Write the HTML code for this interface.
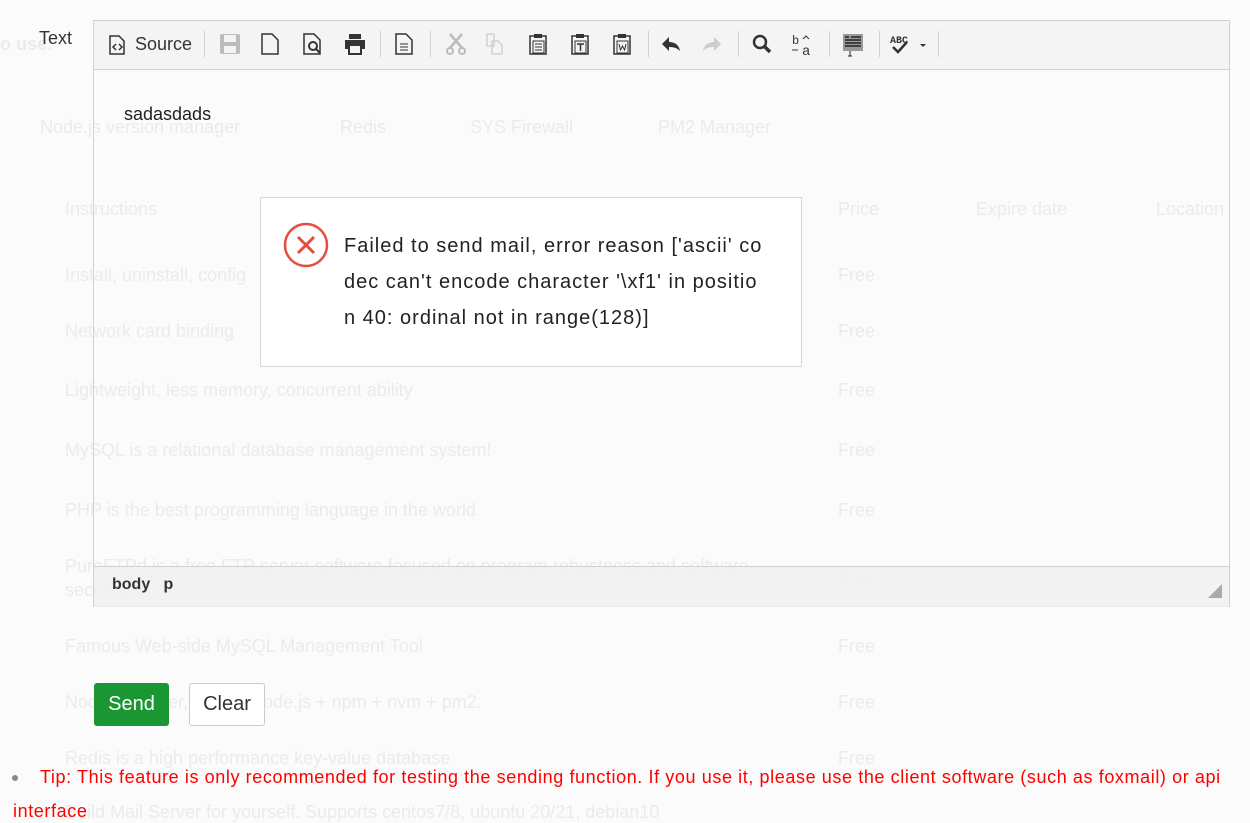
<!DOCTYPE html>
<html><head><meta charset="utf-8"><style>
body{margin:0;width:1250px;height:816px;background:#fbfbfb;font-family:"Liberation Sans",sans-serif;position:relative;overflow:hidden}
.a{position:absolute;white-space:nowrap}
.bg{color:#ebebeb;font-size:18px;position:absolute;white-space:nowrap}
.tb{position:absolute;left:93px;top:20px;width:1135px;height:48px;background:#f4f4f4;border:1px solid #d1d1d1}
.ed{position:absolute;left:93px;top:20px;width:1135px;height:585px;border:1px solid #d1d1d1;background:transparent}
.sb{position:absolute;left:94px;top:566px;width:1135px;height:40px;background:rgba(240,240,240,0.85);border-top:1px solid #d1d1d1}
.sep{position:absolute;top:31px;width:1px;height:26px;background:#d1d1d1}
svg.i{position:absolute;top:33px}
</style></head><body>
<div class="bg" style="left:0;top:34px;font-weight:bold">o use:</div>
<div class="bg" style="left:40px;top:117px">Node.js version manager</div>
<div class="bg" style="left:340px;top:117px">Redis</div>
<div class="bg" style="left:470px;top:117px">SYS Firewall</div>
<div class="bg" style="left:658px;top:117px">PM2 Manager</div>
<div class="bg" style="left:65px;top:199px">Instructions</div>
<div class="bg" style="left:838px;top:199px">Price</div>
<div class="bg" style="left:976px;top:199px">Expire date</div>
<div class="bg" style="left:1156px;top:199px">Location</div>
<div class="bg" style="left:65px;top:265px">Install, uninstall, config</div>
<div class="bg" style="left:65px;top:321px">Network card binding</div>
<div class="bg" style="left:65px;top:380px">Lightweight, less memory, concurrent ability</div>
<div class="bg" style="left:65px;top:440px">MySQL is a relational database management system!</div>
<div class="bg" style="left:65px;top:500px">PHP is the best programming language in the world</div>
<div class="bg" style="left:65px;top:556px">PureFTPd is a free FTP server software focused on program robustness and software</div>
<div class="bg" style="left:65px;top:580px">security.</div>
<div class="bg" style="left:65px;top:636px">Famous Web-side MySQL Management Tool</div>
<div class="bg" style="left:65px;top:692px">Node Manager, Built-in node.js + npm + nvm + pm2.</div>
<div class="bg" style="left:65px;top:748px">Redis is a high performance key-value database</div>
<div class="bg" style="left:65px;top:802px">Build Mail Server for yourself. Supports centos7/8, ubuntu 20/21, debian10</div>
<div class="bg" style="left:838px;top:265px">Free</div><div class="bg" style="left:838px;top:321px">Free</div><div class="bg" style="left:838px;top:380px">Free</div><div class="bg" style="left:838px;top:440px">Free</div><div class="bg" style="left:838px;top:500px">Free</div><div class="bg" style="left:838px;top:568px">Free</div><div class="bg" style="left:838px;top:636px">Free</div><div class="bg" style="left:838px;top:692px">Free</div><div class="bg" style="left:838px;top:748px">Free</div>

<div class="a" style="left:39px;top:28px;font-size:18px;color:#333">Text</div>
<div class="ed"></div>
<div class="tb"></div>
<svg class="i" style="left:108px;top:35px" width="18" height="20"><path d="M2 1h9l5 5v13H2z" fill="none" stroke="#333" stroke-width="1.5"/><path d="M8 9l-3 3 3 3M11 9l3 3-3 3" fill="none" stroke="#333" stroke-width="1.5"/></svg>
<div class="a" style="left:135px;top:34px;font-size:18px;color:#333">Source</div>
<div class="sep" style="left:204px"></div>
<svg class="i" style="left:219px" width="22" height="22"><rect x="1" y="1" width="20" height="20" rx="2" fill="#bbb"/><rect x="5" y="2" width="12" height="7" fill="#f4f4f4"/><rect x="5" y="13" width="12" height="7" fill="#f4f4f4"/></svg>
<svg class="i" style="left:260px" width="20" height="22"><path d="M2 1h10l6 6v14H2z" fill="none" stroke="#333" stroke-width="1.5"/></svg>
<svg class="i" style="left:302px" width="22" height="22"><path d="M2 1h10l6 6v14H2z" fill="none" stroke="#333" stroke-width="1.5"/><circle cx="11" cy="13" r="4" fill="none" stroke="#333" stroke-width="2"/><path d="M14 16l4 4" stroke="#333" stroke-width="2"/></svg>
<svg class="i" style="left:344px" width="22" height="22"><rect x="5" y="1" width="12" height="5" fill="#333"/><rect x="1" y="7" width="20" height="9" fill="#333"/><rect x="5" y="12" width="12" height="9" fill="#f4f4f4" stroke="#333" stroke-width="2"/></svg>
<div class="sep" style="left:380px"></div>
<svg class="i" style="left:394px" width="20" height="22"><path d="M2 1h10l6 6v14H2z" fill="none" stroke="#333" stroke-width="1.5"/><path d="M6 11h8M6 14h8M6 17h8" stroke="#333"/></svg>
<div class="sep" style="left:430px"></div>
<svg class="i" style="left:445px" width="22" height="22"><path d="M5 1l12 14M17 1L5 15" stroke="#bbb" stroke-width="2.5"/><circle cx="5" cy="18" r="3" fill="none" stroke="#bbb" stroke-width="2"/><circle cx="17" cy="18" r="3" fill="none" stroke="#bbb" stroke-width="2"/></svg>
<svg class="i" style="left:485px" width="20" height="22"><path d="M2 1h7v12H2z M7 8h6l4 4v9H7z" fill="none" stroke="#ccc" stroke-width="1.3"/></svg>
<svg class="i" style="left:528px" width="20" height="22"><path d="M6 3H2v18h16V3h-4" fill="none" stroke="#333" stroke-width="1.5"/><rect x="6" y="1" width="8" height="4" fill="#333"/><rect x="5" y="8" width="11" height="12" fill="none" stroke="#333"/><path d="M7 11h7M7 14h7M7 17h7" stroke="#333"/></svg>
<svg class="i" style="left:570px" width="20" height="22"><path d="M6 3H2v18h16V3h-4" fill="none" stroke="#333" stroke-width="1.5"/><rect x="6" y="1" width="8" height="4" fill="#333"/><rect x="5" y="8" width="11" height="12" fill="none" stroke="#333"/><path d="M7 11h7M10.5 11v7" stroke="#333" stroke-width="1.5"/></svg>
<svg class="i" style="left:612px" width="20" height="22"><path d="M6 3H2v18h16V3h-4" fill="none" stroke="#333" stroke-width="1.5"/><rect x="6" y="1" width="8" height="4" fill="#333"/><rect x="5" y="8" width="11" height="12" fill="none" stroke="#333"/><path d="M7 11l1.5 6 2-4 2 4 1.5-6" fill="none" stroke="#333"/></svg>
<div class="sep" style="left:648px"></div>
<svg class="i" style="left:660px" width="22" height="22"><path d="M9 4L2 11l7 7v-4c5 0 8 1 11 4-1-6-5-9-11-9z" fill="#333"/></svg>
<svg class="i" style="left:701px" width="22" height="22"><path d="M13 4l7 7-7 7v-4c-5 0-8 1-11 4 1-6 5-9 11-9z" fill="#ccc"/></svg>
<div class="sep" style="left:738px"></div>
<svg class="i" style="left:751px" width="22" height="22"><circle cx="9" cy="9" r="6" fill="none" stroke="#333" stroke-width="2.5"/><path d="M13 13l6 6" stroke="#333" stroke-width="3.5"/></svg>
<svg class="i" style="left:792px" width="24" height="24"><text x="0" y="11" font-size="12" font-family="Liberation Mono" fill="#333">b</text><text x="10" y="22" font-size="14" font-family="Liberation Mono" fill="#333">a</text><path d="M11 6l3-3 3 3M0 17h6" fill="none" stroke="#333"/></svg>
<div class="sep" style="left:829px"></div>
<svg class="i" style="left:842px" width="22" height="24"><rect x="1" y="1" width="20" height="17" fill="#999"/><path d="M3 4h4M9 4h10M3 7h16M3 10h16M3 13h16" stroke="#222" stroke-width="1.5"/><path d="M8 18v5M6 23h4" stroke="#222"/></svg>
<div class="sep" style="left:879px"></div>
<svg class="i" style="left:890px" width="40" height="24"><text x="0" y="10" font-size="10" font-family="Liberation Mono" fill="#333" font-weight="bold">ABC</text><path d="M3 14l5 5 9-10" fill="none" stroke="#333" stroke-width="2.5"/><path d="M30 11h6l-3 3z" fill="#333"/></svg>
<div class="sep" style="left:938px"></div>

<div class="a" style="left:124px;top:104px;font-size:18px;color:#222">sadasdads</div>
<div class="sb"></div>
<div class="a" style="left:112px;top:576px;font-size:16px;font-weight:bold;color:#333">body&nbsp;&nbsp;&nbsp;p</div>
<svg class="a" style="left:1208px;top:584px" width="14" height="14"><path d="M14 0L0 14h14z" fill="#aaa"/></svg>

<div class="a" style="left:260px;top:197px;width:540px;height:168px;background:#fff;border:1px solid #d6d6d6"></div>
<svg class="a" style="left:283px;top:222px" width="46" height="46"><circle cx="23" cy="23" r="21" fill="none" stroke="#e84c3d" stroke-width="2.5"/><path d="M15 15l16 16M31 15L15 31" stroke="#e84c3d" stroke-width="3"/></svg>
<div class="a" style="left:344px;top:228px;font-size:20px;line-height:36px;color:#222;letter-spacing:1px">Failed to send mail, error reason ['ascii' co<br>dec can't encode character '\xf1' in positio<br>n 40: ordinal not in range(128)]</div>

<div class="a" style="left:94px;top:683px;width:75px;height:43px;background:#1a9632;border-radius:3px;color:#fff;font-size:20px;line-height:43px;text-align:center">Send</div>
<div class="a" style="left:189px;top:683px;width:74px;height:41px;background:#fff;border:1px solid #ccc;border-radius:3px;color:#333;font-size:20px;line-height:41px;text-align:center">Clear</div>

<div class="a" style="left:12px;top:775px;width:6px;height:6px;border-radius:3px;background:#888"></div>
<div class="a" style="left:40px;top:767px;font-size:18px;color:#f00;letter-spacing:0.6px">Tip: This feature is only recommended for testing the sending function. If you use it, please use the client software (such as foxmail) or api</div>
<div class="a" style="left:13px;top:801px;font-size:18px;color:#f00;letter-spacing:0.6px">interface</div>
</body></html>
